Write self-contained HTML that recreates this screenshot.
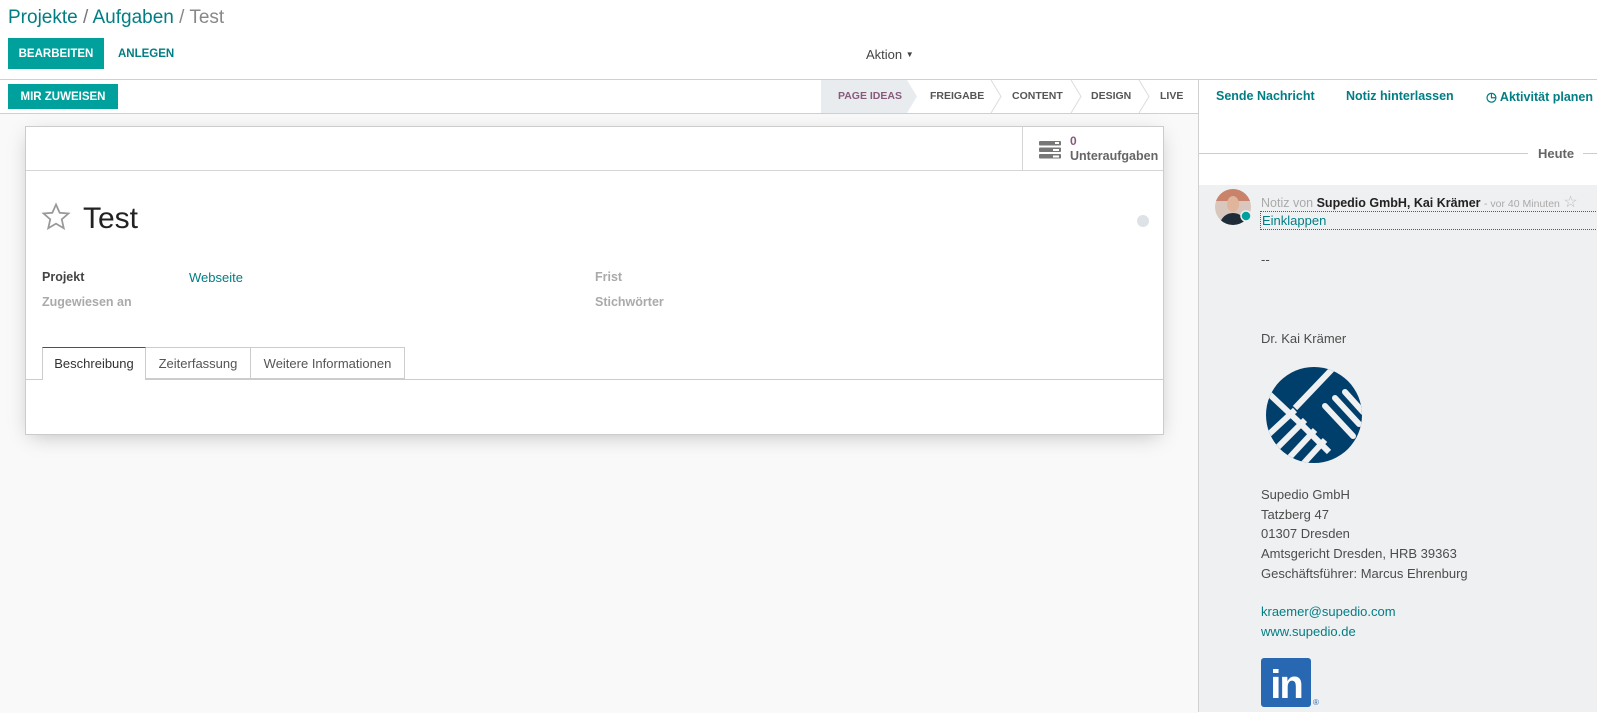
<!DOCTYPE html>
<html><head><meta charset="utf-8">
<style>
*{box-sizing:border-box;margin:0;padding:0}
body{width:1597px;height:712px;overflow:hidden;background:#fff;font-family:"Liberation Sans",sans-serif;font-size:13px;color:#4c4c4c;position:relative}
.a{position:absolute;white-space:nowrap}
.teal{color:#017e84}
.btn{position:absolute;background:#00a09d;color:#fff;font-weight:bold;font-size:11.5px;display:flex;align-items:center;justify-content:center;letter-spacing:0}
.stage{position:absolute;top:80px;height:33px;line-height:33px;font-size:10.5px;font-weight:bold;color:#555}
</style></head><body>
<div class="a" style="left:8px;top:6px;font-size:19px;line-height:24px"><span class="teal">Projekte</span> <span style="color:#777">/</span> <span class="teal">Aufgaben</span> <span style="color:#888">/ Test</span></div>
<div class="btn" style="left:8px;top:38px;width:96px;height:31px">BEARBEITEN</div>
<div class="a teal" style="left:118px;top:47px;font-size:11.5px;font-weight:bold;line-height:15px">ANLEGEN</div>
<div class="a" style="left:866px;top:47px;font-size:13px;line-height:15px;color:#444">Aktion <span style="font-size:8px;vertical-align:2px">▼</span></div>
<div class="a" style="left:0;top:79px;width:1597px;height:1px;background:#d0d0d0"></div>
<div class="a" style="left:0;top:113px;width:1198px;height:600px;background:#f9f9f9"></div>
<div class="a" style="left:0;top:113px;width:1198px;height:1px;background:#d0d0d0"></div>
<div class="btn" style="left:8px;top:84px;width:110px;height:25px">MIR ZUWEISEN</div>
<svg class="a" style="left:815px;top:80px" width="383" height="33">
<polygon points="6,0 92,0 102,16.5 92,33 6,33" fill="#e9ecef"/>
<polyline points="176,0 186,16.5 176,33" fill="none" stroke="#ddd"/>
<polyline points="256,0 266,16.5 256,33" fill="none" stroke="#ddd"/>
<polyline points="324,0 334,16.5 324,33" fill="none" stroke="#ddd"/>
</svg>
<div class="stage" style="left:838px;color:#875a7b">PAGE IDEAS</div>
<div class="stage" style="left:930px">FREIGABE</div>
<div class="stage" style="left:1012px">CONTENT</div>
<div class="stage" style="left:1091px">DESIGN</div>
<div class="stage" style="left:1160px">LIVE</div>
<div class="a" style="left:25px;top:126px;width:1139px;height:309px;background:#fff;border:1px solid #ccc;box-shadow:0 5px 20px -5px rgba(0,0,0,.25)">
 <div class="a" style="left:0;top:43px;width:1137px;height:1px;background:#d5d5d5"></div>
 <div class="a" style="left:996px;top:0;width:1px;height:44px;background:#d5d5d5"></div>
 <svg class="a" style="left:1013px;top:14px" width="24" height="18"><rect x="0" y="0" width="22" height="4.5" rx="1" fill="#777"/><rect x="0" y="6.5" width="22" height="4.5" rx="1" fill="#777"/><rect x="0" y="13" width="22" height="4.5" rx="1" fill="#777"/><rect x="16" y="1" width="4" height="2" fill="#fff"/><rect x="14" y="8" width="6" height="2" fill="#fff"/><rect x="14" y="14.5" width="6" height="2" fill="#fff"/></svg>
 <div class="a" style="left:1044px;top:7px;font-size:12px;font-weight:bold;color:#875a7b;line-height:14px">0</div>
 <div class="a" style="left:1044px;top:22px;font-size:12.5px;color:#666;line-height:15px;font-weight:bold">Unteraufgaben</div>
 <svg class="a" style="left:15px;top:75px" width="30" height="30" viewBox="0 0 24 24"><polygon points="12,2 14.9,8.6 22,9.2 16.6,13.9 18.2,21 12,17.3 5.8,21 7.4,13.9 2,9.2 9.1,8.6" fill="none" stroke="#999" stroke-width="1.4"/></svg>
 <div class="a" style="left:57px;top:74px;font-size:30px;line-height:36px;color:#222">Test</div>
 <div class="a" style="left:1111px;top:88px;width:12px;height:12px;border-radius:50%;background:#dee2e6"></div>
 <div class="a" style="left:16px;top:143px;font-weight:bold;color:#444;font-size:12.5px">Projekt</div>
 <div class="a teal" style="left:163px;top:143px">Webseite</div>
 <div class="a" style="left:16px;top:168px;font-weight:bold;color:#aaa;font-size:12.5px">Zugewiesen an</div>
 <div class="a" style="left:569px;top:143px;font-weight:bold;color:#aaa;font-size:12.5px">Frist</div>
 <div class="a" style="left:569px;top:168px;font-weight:bold;color:#aaa;font-size:12.5px">Stichwörter</div>
 <div class="a" style="left:0;top:252px;width:1137px;height:1px;background:#ccc"></div>
 <div class="a" style="left:16px;top:220px;width:104px;height:33px;background:#fff;border:1px solid #ccc;border-top:1px solid #7c3a55;border-bottom:none;text-align:center;line-height:31px;color:#333">Beschreibung</div>
 <div class="a" style="left:120px;top:220px;width:105px;height:32px;border:1px solid #ccc;border-left:none;text-align:center;line-height:31px;color:#555">Zeiterfassung</div>
 <div class="a" style="left:225px;top:220px;width:154px;height:32px;border:1px solid #ccc;border-left:none;text-align:center;line-height:31px;color:#555">Weitere Informationen</div>
</div>
<div class="a" style="left:1198px;top:80px;width:1px;height:632px;background:#d0d0d0"></div>
<div class="a teal" style="left:1216px;top:89px;font-weight:bold;font-size:12.5px">Sende Nachricht</div>
<div class="a teal" style="left:1346px;top:89px;font-weight:bold;font-size:12.5px">Notiz hinterlassen</div>
<div class="a teal" style="left:1486px;top:89px;font-weight:bold;font-size:12.5px">◷ Aktivität planen</div>
<div class="a" style="left:1199px;top:153px;width:329px;height:1px;background:#ccc"></div>
<div class="a" style="left:1583px;top:153px;width:14px;height:1px;background:#ccc"></div>
<div class="a" style="left:1538px;top:146px;font-weight:bold;color:#666">Heute</div>
<div class="a" style="left:1199px;top:185px;width:398px;height:527px;background:#eff0f2"></div>
<svg class="a" style="left:1215px;top:189px" width="40" height="38"><defs><clipPath id="c"><circle cx="18" cy="18" r="18"/></clipPath></defs><g clip-path="url(#c)"><rect width="36" height="36" fill="#d9c7bd"/><rect x="0" y="0" width="36" height="12" fill="#c9836a"/><ellipse cx="18" cy="15" rx="6" ry="8" fill="#e0b59c"/><path d="M4 36 Q8 24 18 24 Q28 24 32 36Z" fill="#1f2b38"/></g><circle cx="31" cy="27" r="5" fill="#00a09d" stroke="#eff0f2" stroke-width="1.5"/></svg>
<div class="a" style="left:1261px;top:192px;font-size:12.5px;color:#aaa">Notiz von <b style="color:#222">Supedio GmbH, Kai Krämer</b> <span style="font-size:10.5px">- vor 40 Minuten</span> <span style="font-size:16px;color:#bbb">☆</span></div>
<div class="a teal" style="left:1260px;top:211px;width:340px;height:19px;border:1px dotted #017e84;border-right:none;padding-left:1px;line-height:17px">Einklappen</div>
<div class="a" style="left:1261px;top:252px">--</div>
<div class="a" style="left:1261px;top:331px">Dr. Kai Krämer</div>
<svg class="a" style="left:1265px;top:366px" width="98" height="98" viewBox="0 0 98 98"><defs><clipPath id="l"><circle cx="49" cy="49" r="48"/></clipPath></defs><g clip-path="url(#l)"><rect width="98" height="98" fill="#003f6b"/><g stroke="#eff0f2" stroke-width="6" stroke-linecap="butt"><line x1="72" y1="-2" x2="30" y2="42"/><line x1="0" y1="24" x2="36" y2="58"/><line x1="30" y1="44" x2="2" y2="70"/><line x1="40" y1="54" x2="12" y2="82"/><line x1="50" y1="64" x2="24" y2="92"/><line x1="60" y1="74" x2="38" y2="98"/><line x1="36" y1="58" x2="64" y2="86"/></g><g stroke="#eff0f2" stroke-width="6" stroke-linecap="round"><line x1="60" y1="40" x2="88" y2="70"/><line x1="70" y1="32" x2="94" y2="58"/><line x1="80" y1="26" x2="98" y2="46"/></g></g></svg>
<div class="a" style="left:1261px;top:485px;line-height:19.7px">Supedio GmbH<br>Tatzberg 47<br>01307 Dresden<br>Amtsgericht Dresden, HRB 39363<br>Geschäftsführer: Marcus Ehrenburg</div>
<div class="a teal" style="left:1261px;top:602px;line-height:19.7px">kraemer@supedio.com<br>www.supedio.de</div>
<div class="a" style="left:1261px;top:658px;width:50px;height:49px;background:#2867b2;border-radius:3px;color:#fff;font-weight:bold;font-size:40px;line-height:54px;text-align:center;letter-spacing:-2px">in</div>
<div class="a" style="left:1313px;top:698px;font-size:8px;color:#2867b2">®</div>
</body></html>
